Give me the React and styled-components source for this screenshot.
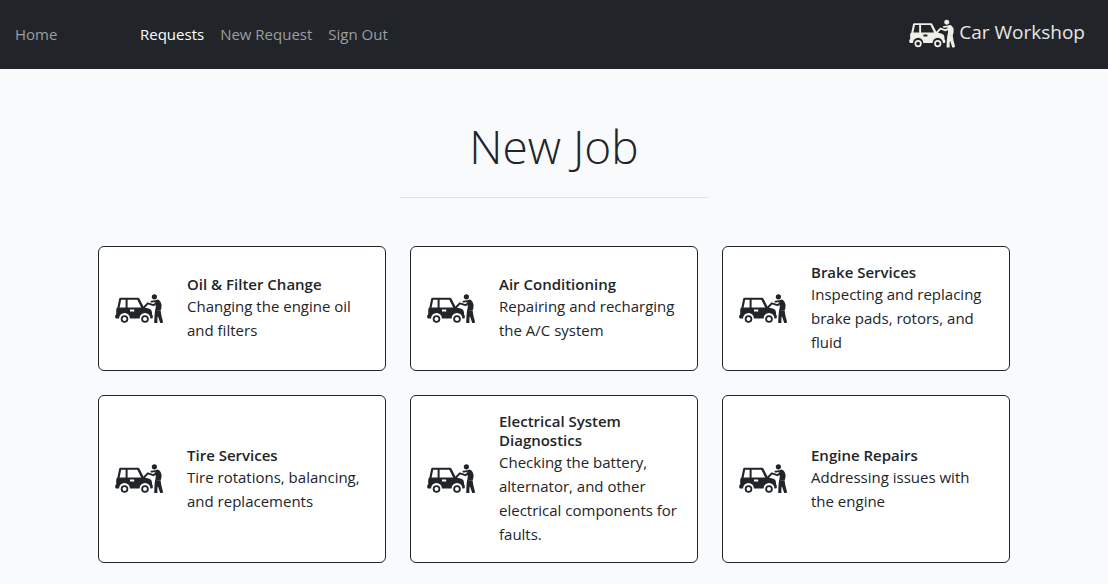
import React from 'react';
import styled, { createGlobalStyle } from 'styled-components';

const GlobalStyle = createGlobalStyle`
  *, *::before, *::after { box-sizing: border-box; }
  body {
    margin: 0;
    background: #f8fafc;
    color: #212529;
    font-family: "Segoe UI", "Open Sans", "Noto Sans", sans-serif;
    font-size: 15px;
    line-height: 24px;
  }
`;

const Header = styled.header`
  display: flex;
  align-items: center;
  justify-content: space-between;
  min-height: 69px;
  padding: 0 23px 2px 15px;
  background: #212529;
`;

const Nav = styled.nav`
  display: flex;
  align-items: center;
`;

const NavLink = styled.a`
  color: ${(p) => (p.$active ? '#ffffff' : '#9b9d9f')};
  text-decoration: none;
`;

const HomeSlot = styled.div`
  width: 125px;
`;

const NavLinks = styled.div`
  display: flex;
  gap: 16px;
`;

const Brand = styled.a`
  display: flex;
  align-items: center;
  gap: 4px;
  color: #e6e6e4;
  font-size: 19px;
  text-decoration: none;
`;

const BrandName = styled.span`
  padding-bottom: 4px;
`;

const Main = styled.main`
  max-width: 936px;
  margin: 0 auto;
  padding: 48px 12px 24px;
`;

const Title = styled.h1`
  margin: 0 0 22px;
  font-size: 46px;
  font-weight: 300;
  line-height: 58px;
  text-align: center;
`;

const Divider = styled.hr`
  max-width: 308px;
  margin: 0 auto 48px;
  border: 0;
  border-top: 1px solid #dfe1e3;
`;

const Grid = styled.div`
  display: grid;
  grid-template-columns: repeat(3, minmax(0, 1fr));
  gap: 24px;
`;

const Card = styled.a`
  display: flex;
  align-items: center;
  gap: 24px;
  padding: 16px;
  border: 1px solid #212529;
  border-radius: 6px;
  background: #ffffff;
  color: inherit;
  text-decoration: none;
`;

const CardTitle = styled.h2`
  margin: 0;
  font-size: 15px;
  font-weight: 600;
  line-height: 19px;
`;

const CardText = styled.p`
  margin: 0;
`;

const Icon = styled.svg`
  flex: none;
  width: ${(p) => p.$width}px;
  height: 32px;
  color: ${(p) => p.$color};
`;

function WorkshopIcon({ width = 48, color = '#212529' }) {
  return (
    <Icon $width={width} $color={color} viewBox="0 0 48 32" fill="currentColor" aria-hidden="true">
      <path
        fillRule="evenodd"
        d="M5.4 4.8H23Q24 4.8 24.5 5.7L28.8 14.3L34.4 15.7Q37 16.6 37 19.4V21.8Q37.8 22 37.8 22.8V24.6Q37.8 25.4 37 25.4H35.4A5.4 5.4 0 0 0 24.6 25.4H14.9A5.4 5.4 0 0 0 4.1 25.4H1.4Q.2 25.4 .2 24.2V22.8Q.2 21.8 1.2 21.6V17Q1.2 15.4 2.4 14.5L4.2 5.8Q4.4 4.8 5.4 4.8ZM6.2 6.7L4.6 14.4H10.6V6.7ZM12.6 6.7V14.4H26.2L22.3 6.7ZM15 16.6V18.5H19.2V16.6Z"
      />
      <path fillRule="evenodd" d="M9.5 22.2A3.8 3.8 0 1 0 9.5 29.8A3.8 3.8 0 1 0 9.5 22.2ZM9.5 24A2 2 0 1 1 9.5 28A2 2 0 1 1 9.5 24Z" />
      <path fillRule="evenodd" d="M30 22.2A3.8 3.8 0 1 0 30 29.8A3.8 3.8 0 1 0 30 22.2ZM30 24A2 2 0 1 1 30 28A2 2 0 1 1 30 24Z" />
      <circle cx="39.4" cy="3.8" r="2.6" />
      <path d="M41 7.2Q42.6 5.9 44.2 7.2Q46.4 9 46.6 12Q46.7 14.8 45.6 17.6L40.2 17.2Q41.2 13.6 40.4 10.8Z" />
      <path
        d="M42.4 9.4L38.4 12.2L32.8 10.3L28.4 15M42 8L36.4 8.6"
        fill="none"
        stroke="currentColor"
        strokeWidth="1.9"
        strokeLinecap="round"
        strokeLinejoin="round"
      />
      <path d="M40.1 17L45.6 17.4L46.4 22.4L48 28.8Q48 30 46.9 30H45.2L43 23.4L42.4 24.8V30H39.2L39.5 22.6Z" />
    </Icon>
  );
}

const services = [
  { title: 'Oil & Filter Change', text: 'Changing the engine oil and filters' },
  { title: 'Air Conditioning', text: 'Repairing and recharging the A/C system' },
  { title: 'Brake Services', text: 'Inspecting and replacing brake pads, rotors, and fluid' },
  { title: 'Tire Services', text: 'Tire rotations, balancing, and replacements' },
  {
    title: 'Electrical System Diagnostics',
    text: 'Checking the battery, alternator, and other electrical components for faults.',
  },
  { title: 'Engine Repairs', text: 'Addressing issues with the engine' },
];

export default function App() {
  return (
    <>
      <GlobalStyle />
      <Header>
        <Nav>
          <HomeSlot>
            <NavLink href="#home">Home</NavLink>
          </HomeSlot>
          <NavLinks>
            <NavLink href="#requests" $active aria-current="page">Requests</NavLink>
            <NavLink href="#new-request">New Request</NavLink>
            <NavLink href="#sign-out">Sign Out</NavLink>
          </NavLinks>
        </Nav>
        <Brand href="#home">
          <WorkshopIcon width={46} color="#efefe6" />
          <BrandName>Car Workshop</BrandName>
        </Brand>
      </Header>
      <Main>
        <Title>New Job</Title>
        <Divider />
        <Grid>
          {services.map((service) => (
            <Card key={service.title} href="#new-job">
              <WorkshopIcon />
              <div>
                <CardTitle>{service.title}</CardTitle>
                <CardText>{service.text}</CardText>
              </div>
            </Card>
          ))}
        </Grid>
      </Main>
    </>
  );
}
